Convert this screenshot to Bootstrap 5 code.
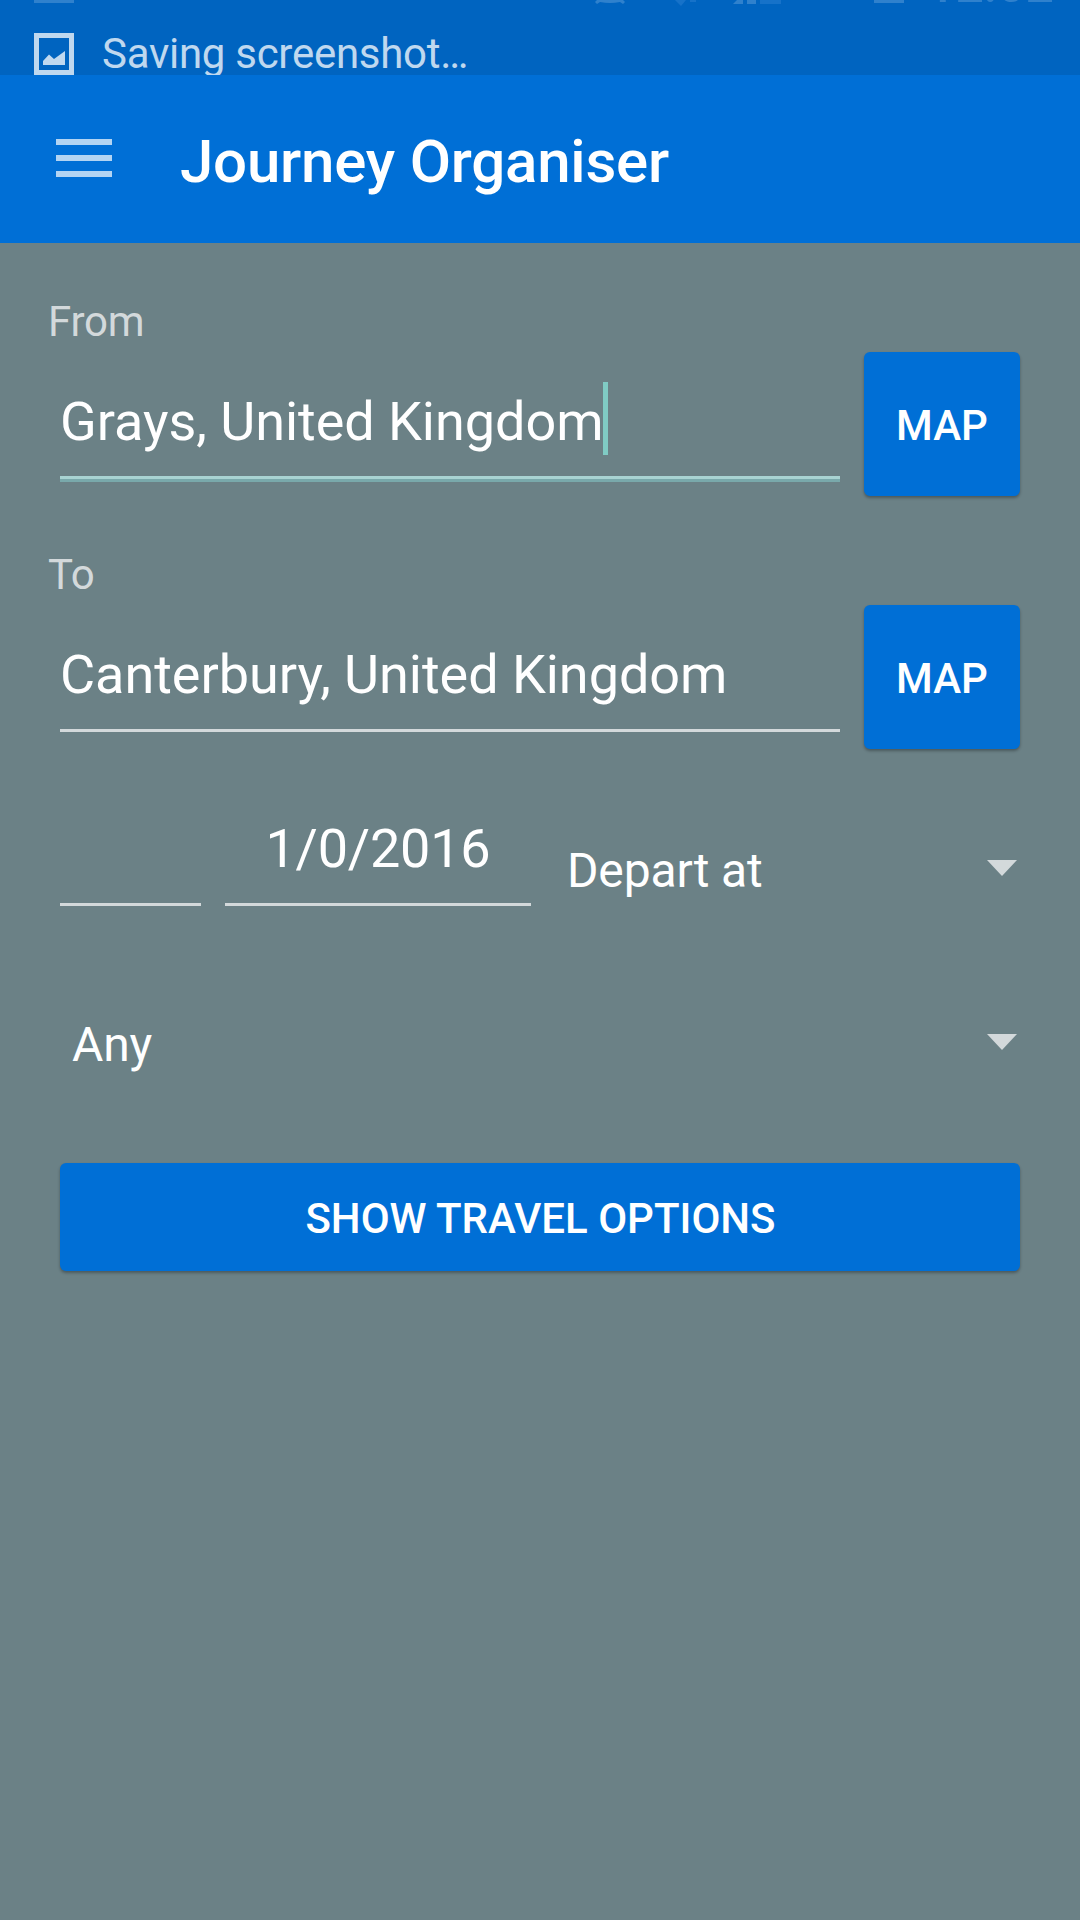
<!DOCTYPE html>
<html lang="en">
<head>
<meta charset="utf-8">
<meta name="viewport" content="width=device-width, initial-scale=1">
<title>Journey Organiser</title>
<link href="https://cdn.jsdelivr.net/npm/bootstrap@5.3.0/dist/css/bootstrap.min.css" rel="stylesheet">
<style>
  body { background: #6b8186; color: #fff; font-family: Roboto, "Noto Sans", sans-serif; min-height: 1920px; }
  .status-strip { height: 75px; background: #0064c0; }
  .leaving-icons { height: 6px; flex: none; }
  .leaving-icons svg { flex: none; }
  .clock { font-size: 50px; font-weight: 500; line-height: 60px; height: 60px; margin: -45px 0 0 -13px; width: 130px; color: #2f81cd; }
  .ticker { padding: 27px 0 0 34px; gap: 28px; }
  .ticker-text { font-size: 42px; line-height: 50px; margin-top: -4px; letter-spacing: -.28px; color: rgba(255,255,255,.75); }
  .app-bar { height: 168px; background: #006fd6; padding: 0 56px; gap: 68px; }
  .app-bar svg { margin-top: -2px; }
  .app-title { font-size: 60px; line-height: 70px; font-weight: 500; letter-spacing: -.22px; padding-top: 5px; }
  .journey-form { padding: 54px 60px 0; }
  .place-label { font-size: 42px; line-height: 50px; margin: 0 0 5px -12px; letter-spacing: -.25px; color: #d3d9db; }
  .place-row { height: 144px; gap: 24px; margin-bottom: 54px; }
  .text-line { height: 127px; padding-top: 30px; font-size: 54px; line-height: 73px; border-bottom: 3px solid #d3d9db; white-space: nowrap; letter-spacing: -.04px; }
  .text-line span { padding-top: 3px; }
  .text-line.active { border-bottom-color: #a8d3d2; box-shadow: 0 3px 0 #79a9ab; }
  .caret { width: 5px; height: 73px; background: #80cbc4; }
  .btn-blue, .btn-blue:hover { background: #006fd6; color: #fff; border: 0; border-radius: 6px; font-size: 42px; line-height: 50px; font-weight: 500; box-shadow: 0 2px 3px rgba(0,0,0,.3); }
  .btn-place { width: 156px; padding: 3px 0 0; }
  .btn-wide { height: 108px; padding: 4px 0 0 1px; margin-top: 83px; }
  .when-row { height: 127px; gap: 24px; margin-top: -24px; }
  .time-line { width: 141px; }
  .date-line { width: 306px; letter-spacing: -.2px; }
  .spin { height: 76px; padding-right: 3px; font-size: 48px; line-height: 56px; letter-spacing: -.15px; }
  .spin span { padding-top: 5px; }
  .spin-when { padding-left: 12px; }
  .spin-any { margin-top: 98px; padding-left: 12px; }
</style>
<script src="https://cdn.jsdelivr.net/npm/bootstrap@5.3.0/dist/js/bootstrap.bundle.min.js"></script>
</head>
<body>
<header>
  <div class="status-strip overflow-hidden d-flex flex-column">
    <div class="leaving-icons d-flex">
      <svg width="940" height="6" viewBox="0 0 940 6" fill="#2f81cd">
        <path d="M34 0h40v3H34z"/>
        <path d="M597 0h26l2 2-2 2-3-2q-10 2-20 0l-3 2-2-2z"/>
        <path d="M675 0h11l-5 6zM690 0h6v2h-6zM760 0h21v4h-21z" fill="#1672c9"/>
        <path d="M737 0h6v4h-10zM747 0h9v4h-9zM874 0h30v3h-30z"/>
      </svg>
      <div class="clock">12:02</div>
    </div>
    <div class="ticker d-flex align-items-start">
      <svg width="40" height="42" viewBox="0 0 40 42" fill="#bfd8ef">
        <path fill-rule="evenodd" d="M0 0h40v42H0zM5 5v32h30V5z"/>
        <path d="M9 32v-4l6-6.500 5 4.500L31 18v14z"/>
      </svg>
      <div class="ticker-text">Saving screenshot…</div>
    </div>
  </div>
  <nav class="app-bar d-flex align-items-center">
    <svg width="56" height="38" viewBox="0 0 56 38" fill="#b3d4f3"><path d="M0 0h56v6H0zM0 16h56v6H0zM0 32h56v6H0z"/></svg>
    <h1 class="app-title mb-0">Journey Organiser</h1>
  </nav>
</header>
<main class="journey-form">
  <div class="place-label">From</div>
  <div class="place-row d-flex align-items-start">
    <div class="text-line active d-flex flex-grow-1 align-items-start"><span>Grays, United Kingdom</span><i class="caret"></i></div>
    <button type="button" class="btn btn-blue btn-place h-100">MAP</button>
  </div>
  <div class="place-label">To</div>
  <div class="place-row d-flex align-items-start">
    <div class="text-line d-flex flex-grow-1 align-items-start"><span>Canterbury, United Kingdom</span></div>
    <button type="button" class="btn btn-blue btn-place h-100">MAP</button>
  </div>
  <div class="when-row d-flex align-items-end">
    <div class="text-line time-line"></div>
    <div class="text-line date-line d-flex align-items-start justify-content-center"><span>1/0/2016</span></div>
    <div class="spin spin-when d-flex flex-grow-1 align-items-center justify-content-between">
      <span>Depart at</span>
      <svg width="30" height="16" viewBox="0 0 30 16" fill="#d3d9db"><path d="M0 0h30L15 16z"/></svg>
    </div>
  </div>
  <div class="spin spin-any d-flex align-items-center justify-content-between">
    <span>Any</span>
    <svg width="30" height="16" viewBox="0 0 30 16" fill="#d3d9db"><path d="M0 0h30L15 16z"/></svg>
  </div>
  <button type="button" class="btn btn-blue btn-wide w-100">SHOW TRAVEL OPTIONS</button>
</main>
</body>
</html>
